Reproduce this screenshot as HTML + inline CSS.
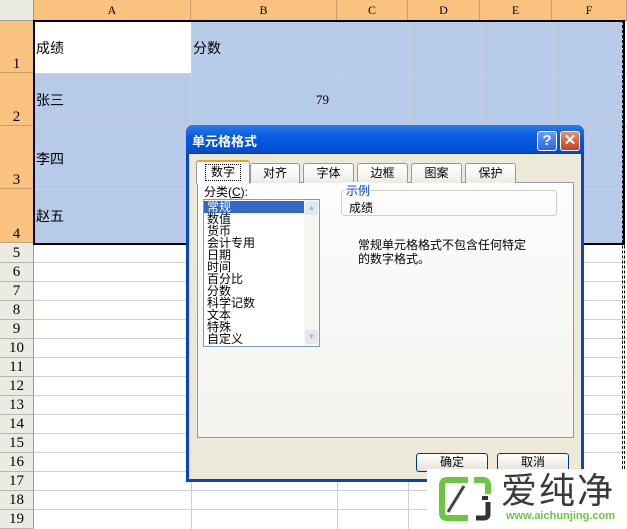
<!DOCTYPE html>
<html><head><meta charset="utf-8"><style>
*{margin:0;padding:0;box-sizing:border-box}
body{width:627px;height:529px;overflow:hidden;background:#fff;position:relative;font-family:"Liberation Sans","Noto Sans CJK SC",sans-serif;font-size:12px;color:#000}
.a{position:absolute}
.ch{background:#f9c27e;border-right:1px solid #c8a070;border-bottom:1px solid #b08050;text-align:center;font-family:"Liberation Serif",serif;font-size:12px;line-height:20px;top:0;height:21px}
.rh{background:#f9c27e;border-bottom:1px solid #c8a070;border-right:1px solid #b08050;left:0;width:34px;text-align:center;font-family:"Liberation Serif",serif;font-size:15px;display:flex;align-items:flex-end;justify-content:center;line-height:16px}
.rg{background:#ecebe3;border-bottom:1px solid #b8b8b0;border-right:1px solid #999;left:0;width:34px;text-align:center;font-family:"Liberation Serif",serif;font-size:15px;line-height:19px;height:19px}
.vl{width:1px;background:#d0d0d0}
.hl{height:1px;background:#d0d0d0;left:34px;width:593px}
.cell{font-size:14px}
.tab{top:163px;height:20px;border:1px solid #919b9c;border-bottom:none;background:linear-gradient(#fff,#ecebe6);text-align:center;font-size:12px;line-height:18px;border-radius:3px 3px 0 0}
.li{font-size:12px;line-height:12px;height:12px;padding-left:3px}
.btn{top:453px;height:19px;width:72px;border:1px solid #003c74;border-radius:3px;background:linear-gradient(#fff,#e3e2da);text-align:center;line-height:17px;font-size:12px}
</style></head><body>
<div class="a" style="left:0;top:0;width:34px;height:21px;background:#ecebe3;border-right:1px solid #999;border-bottom:1px solid #999"></div>
<div class="a ch" style="left:34px;width:157px">A</div>
<div class="a ch" style="left:191px;width:146px">B</div>
<div class="a ch" style="left:337px;width:71px">C</div>
<div class="a ch" style="left:408px;width:72px">D</div>
<div class="a ch" style="left:480px;width:72px">E</div>
<div class="a ch" style="left:552px;width:75px">F</div>
<div class="a" style="left:34px;top:21px;width:590px;height:222px;background:#b7cbe9"></div>
<div class="a" style="left:34px;top:21px;width:157px;height:52px;background:#fff"></div>
<div class="a vl" style="left:191px;top:21px;height:508px;background:#c8cfdc"></div>
<div class="a vl" style="left:337px;top:21px;height:508px;background:#c8cfdc"></div>
<div class="a vl" style="left:408px;top:21px;height:508px;background:#c8cfdc"></div>
<div class="a vl" style="left:480px;top:21px;height:508px;background:#c8cfdc"></div>
<div class="a vl" style="left:552px;top:21px;height:508px;background:#c8cfdc"></div>
<div class="a hl" style="top:73px;background:#c8cfdc"></div>
<div class="a hl" style="top:126px;background:#c8cfdc"></div>
<div class="a hl" style="top:189px;background:#c8cfdc"></div>
<div class="a rh" style="top:21px;height:52px">1</div>
<div class="a rh" style="top:73px;height:53px">2</div>
<div class="a rh" style="top:126px;height:63px">3</div>
<div class="a rh" style="top:189px;height:54px">4</div>
<div class="a rg" style="top:244px">5</div>
<div class="a rg" style="top:263px">6</div>
<div class="a rg" style="top:282px">7</div>
<div class="a rg" style="top:301px">8</div>
<div class="a rg" style="top:320px">9</div>
<div class="a rg" style="top:339px">10</div>
<div class="a rg" style="top:358px">11</div>
<div class="a rg" style="top:377px">12</div>
<div class="a rg" style="top:396px">13</div>
<div class="a rg" style="top:415px">14</div>
<div class="a rg" style="top:434px">15</div>
<div class="a rg" style="top:453px">16</div>
<div class="a rg" style="top:472px">17</div>
<div class="a rg" style="top:491px">18</div>
<div class="a rg" style="top:510px">19</div>
<div class="a hl" style="top:262px"></div><div class="a hl" style="top:281px"></div><div class="a hl" style="top:300px"></div><div class="a hl" style="top:319px"></div><div class="a hl" style="top:338px"></div><div class="a hl" style="top:357px"></div><div class="a hl" style="top:376px"></div><div class="a hl" style="top:395px"></div><div class="a hl" style="top:414px"></div><div class="a hl" style="top:433px"></div><div class="a hl" style="top:452px"></div><div class="a hl" style="top:471px"></div><div class="a hl" style="top:490px"></div><div class="a hl" style="top:509px"></div>
<div class="a" style="left:33px;top:20px;width:592px;height:225px;border:2px solid #000"></div>
<div class="a" style="left:622px;top:20px;width:3px;height:509px;border-left:1px dashed #000;border-right:1px dashed #000"></div>
<div class="a cell" style="left:36px;top:38px">成绩</div>
<div class="a cell" style="left:193px;top:38px">分数</div>
<div class="a cell" style="left:36px;top:90px">张三</div>
<div class="a" style="left:316px;top:92px;font-family:'Liberation Serif',serif;font-size:13px">79</div>
<div class="a cell" style="left:36px;top:149px">李四</div>
<div class="a cell" style="left:36px;top:206px">赵五</div>
<div class="a" style="left:186px;top:125px;width:398px;height:357px;background:#0842c8;border-radius:7px 7px 0 0"></div>
<div class="a" style="left:186px;top:125px;width:398px;height:29px;background:linear-gradient(#2a7ce8,#0a5ae0 40%,#0450d8 85%,#0a40b8);border-radius:7px 7px 0 0"></div>
<div class="a" style="left:192px;top:131px;color:#fff;font-weight:bold;font-size:13px">单元格格式</div>
<div class="a" style="left:537px;top:131px;width:20px;height:20px;border:1px solid #fff;border-radius:3px;background:linear-gradient(#6a9cf4,#2c64dc);color:#fff;font-weight:bold;text-align:center;line-height:18px;font-size:15px">?</div>
<div class="a" style="left:560px;top:131px;width:20px;height:20px;border:1px solid #fff;border-radius:3px;background:linear-gradient(#e8906c,#c8401c);color:#fff;font-weight:bold;text-align:center;line-height:18px;font-size:15px">✕</div>
<div class="a" style="left:189px;top:154px;width:392px;height:325px;background:#ece9d8"></div>
<div class="a" style="left:197px;top:182px;width:377px;height:256px;border:1px solid #919b9c;background:linear-gradient(#fcfcfe,#f4f3ee)"></div>
<div class="a tab" style="left:250px;width:50px">对齐</div>
<div class="a tab" style="left:303px;width:51px">字体</div>
<div class="a tab" style="left:357px;width:51px">边框</div>
<div class="a tab" style="left:411px;width:51px">图案</div>
<div class="a tab" style="left:465px;width:51px">保护</div>
<div class="a tab" style="left:196px;top:160px;height:24px;width:54px;background:#fcfcfe;border-top:2px solid #f0a030"><span style="display:inline-block;border:1px dotted #000;padding:0 5px;line-height:15px;margin-top:2px">数字</span></div>
<div class="a" style="left:204px;top:183px;font-size:12px">分类(<u>C</u>):</div>
<div class="a" style="left:341px;top:190px;width:216px;height:26px;border:1px solid #d0d0bf;border-radius:3px"></div>
<div class="a" style="left:345px;top:182px;background:#fafaf8;color:#0046d5;padding:0 1px">示例</div>
<div class="a" style="left:349px;top:199px">成绩</div>
<div class="a" style="left:358px;top:238px;line-height:14px">常规单元格格式不包含任何特定<br>的数字格式。</div>
<div class="a" style="left:203px;top:199px;width:117px;height:148px;background:#fff;border:1px solid #7f9db9"></div>
<div class="a" style="left:304px;top:200px;width:15px;height:146px;background:#f6f6f2"></div>
<div class="a" style="left:305px;top:201px;width:13px;height:14px;background:#e4e6f0;border-radius:2px;color:#b0b8c8;font-size:8px;text-align:center;line-height:14px">▲</div>
<div class="a" style="left:305px;top:330px;width:13px;height:14px;background:#e4e6f0;border-radius:2px;color:#b0b8c8;font-size:8px;text-align:center;line-height:14px">▼</div>
<div class="a" style="left:204px;top:201px;width:100px">
<div class="li" style="background:#316ac5;color:#fff">常规</div>
<div class="li">数值</div><div class="li">货币</div><div class="li">会计专用</div><div class="li">日期</div><div class="li">时间</div><div class="li">百分比</div><div class="li">分数</div><div class="li">科学记数</div><div class="li">文本</div><div class="li">特殊</div><div class="li">自定义</div>
</div>
<div class="a btn" style="left:416px">确定</div>
<div class="a btn" style="left:497px">取消</div>
<div class="a" style="left:427px;top:469px;width:200px;height:60px;background:#fff"></div>
<svg class="a" style="left:438px;top:476px" width="56" height="46" viewBox="0 0 56 46">
<path d="M30 4 H9 Q4 4 4 9 V37 Q4 42 9 42 H30" fill="none" stroke="#6cc644" stroke-width="6"/>
<path d="M36 4 H45 Q50 4 50 9 V18" fill="none" stroke="#6cc644" stroke-width="6"/>
<path d="M10 36 L26 10" stroke="#444" stroke-width="3"/>
<path d="M50 26 V38 Q50 42 46 42 H38" fill="none" stroke="#333" stroke-width="5"/>
<rect x="44" y="20" width="6" height="4" fill="#333"/>
</svg>
<div class="a" style="left:501px;top:472px;font-size:36px;color:#3a3a3a;letter-spacing:2px;line-height:38px">爱纯净</div>
<div class="a" style="left:506px;top:510px;font-size:11px;color:#6cc644;font-weight:bold;letter-spacing:0px">www.aichunjing.com</div>
</body></html>
